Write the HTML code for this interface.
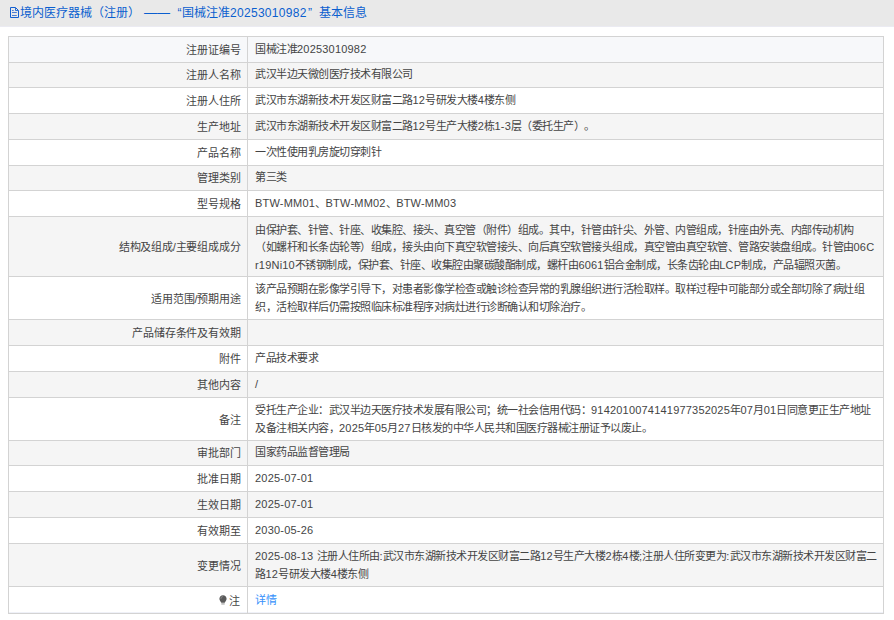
<!DOCTYPE html>
<html lang="zh-CN"><head><meta charset="utf-8"><style>
*{margin:0;padding:0;box-sizing:border-box}
html,body{width:894px;height:620px;overflow:hidden;background:#fff}
body{position:relative;font-family:"Liberation Sans",sans-serif;color:#444;text-spacing-trim:space-all;font-weight:300}
.hd{position:absolute;left:0;top:0;width:894px;height:27px;background:#e9e9e9;border-bottom:1px solid #ebebf2}
.hd .t{position:absolute;left:21px;top:0;height:26px;line-height:26px;font-size:12px;color:#0b5fcf;white-space:nowrap;font-weight:400}
.hd svg{position:absolute;left:10px;top:7px;overflow:visible}
.row{position:absolute;left:8px;width:876px;border-top:1px solid #d3d3d3}
.bl{position:absolute;left:8px;top:36px;width:1px;height:578px;background:#d3d3d3}
.br{position:absolute;left:883px;top:36px;width:1px;height:578px;background:#d3d3d3}
.bb{position:absolute;left:8px;top:613px;width:876px;height:1px;background:#d3d3d3}
.vd{position:absolute;left:247px;top:36px;width:1px;height:577px;background:#d3d3d3}
.lab{position:absolute;right:643.5px;letter-spacing:-0.2px;font-size:11px;white-space:nowrap;text-align:right}
.val{position:absolute;left:247px;letter-spacing:-0.5px;font-size:11px;white-space:nowrap;line-height:17.4px}
.g{background:#f5f5f5}
.b{background:#f7f8fa}
a{color:#3590fb;text-decoration:none;font-weight:400}
.a{letter-spacing:0.2px}
</style></head><body>
<div class="hd"><svg width="9" height="11" viewBox="0 0 9 11"><path d="M0.5 0.5H5.5L8.5 3.5V10.5H0.5Z" fill="none" stroke="#1560d0" stroke-width="1" stroke-linejoin="round"/><path d="M5.5 0.8V3.5H8.2" fill="none" stroke="#1560d0" stroke-width="0.9"/><path d="M2 3.5H3.7M2 5.5H6.8M2 8.5H6.8" fill="none" stroke="#3a6fd0" stroke-width="0.9"/></svg><span class="t" style="left:20px">境内医疗器械（注册）</span><span class="t" style="left:144px;font-size:13px">——</span><span class="t" style="left:177.5px">“</span><span class="t" style="left:182px">国械注准</span><span class="t" style="left:230px;letter-spacing:0.3px">20253010982</span><span class="t" style="left:308px">”</span><span class="t" style="left:319px">基本信息</span></div>

<div class="row b" style="top:36px;height:26px">
<div class="lab" style="top:0.5px;height:25px;line-height:25px">注册证编号</div>
<div class="val" style="top:4.30px">国械注准<span class="a">20253010982</span></div>
</div>
<div class="row g" style="top:62px;height:25px">
<div class="lab" style="top:0px;height:24px;line-height:24px">注册人名称</div>
<div class="val" style="top:3.30px">武汉半边天微创医疗技术有限公司</div>
</div>
<div class="row " style="top:87px;height:26px">
<div class="lab" style="top:0.5px;height:25px;line-height:25px">注册人住所</div>
<div class="val" style="top:4.30px">武汉市东湖新技术开发区财富二路<span class="a">12</span>号研发大楼<span class="a">4</span>楼东侧</div>
</div>
<div class="row g" style="top:113px;height:26px">
<div class="lab" style="top:0.5px;height:25px;line-height:25px">生产地址</div>
<div class="val" style="top:4.30px">武汉市东湖新技术开发区财富二路<span class="a">12</span>号生产大楼<span class="a">2</span>栋<span class="a">1-3</span>层（委托生产）。</div>
</div>
<div class="row " style="top:139px;height:26px">
<div class="lab" style="top:0.5px;height:25px;line-height:25px">产品名称</div>
<div class="val" style="top:4.30px">一次性使用乳房旋切穿刺针</div>
</div>
<div class="row g" style="top:165px;height:25px">
<div class="lab" style="top:0px;height:24px;line-height:24px">管理类别</div>
<div class="val" style="top:3.30px">第三类</div>
</div>
<div class="row " style="top:190px;height:26px">
<div class="lab" style="top:0.5px;height:25px;line-height:25px">型号规格</div>
<div class="val" style="top:4.30px"><span class="a">BTW-MM01</span>、<span class="a">BTW-MM02</span>、<span class="a">BTW-MM03</span></div>
</div>
<div class="row g" style="top:216px;height:60px">
<div class="lab" style="top:0.5px;height:59px;line-height:59px">结构及组成/主要组成成分</div>
<div class="val" style="top:4.90px">由保护套、针管、针座、收集腔、接头、真空管（附件）组成。其中，针管由针尖、外管、内管组成，针座由外壳、内部传动机构<br>（如螺杆和长条齿轮等）组成，接头由向下真空软管接头、向后真空软管接头组成，真空管由真空软管、管路安装盘组成。针管由<span class="a">06C</span><br><span class="a">r19Ni10</span>不锈钢制成，保护套、针座、收集腔由聚碳酸酯制成，螺杆由<span class="a">6061</span>铝合金制成，长条齿轮由<span class="a">LCP</span>制成，产品辐照灭菌。</div>
</div>
<div class="row " style="top:276px;height:43px">
<div class="lab" style="top:0.5px;height:42px;line-height:42px">适用范围/预期用途</div>
<div class="val" style="top:4.10px">该产品预期在影像学引导下，对患者影像学检查或触诊检查异常的乳腺组织进行活检取样。取样过程中可能部分或全部切除了病灶组<br>织，活检取样后仍需按照临床标准程序对病灶进行诊断确认和切除治疗。</div>
</div>
<div class="row g" style="top:319px;height:26px">
<div class="lab" style="top:0.5px;height:25px;line-height:25px">产品储存条件及有效期</div>
<div class="val" style="top:4.30px"></div>
</div>
<div class="row " style="top:345px;height:26px">
<div class="lab" style="top:0.5px;height:25px;line-height:25px">附件</div>
<div class="val" style="top:4.30px">产品技术要求</div>
</div>
<div class="row g" style="top:371px;height:26px">
<div class="lab" style="top:0.5px;height:25px;line-height:25px">其他内容</div>
<div class="val" style="top:4.30px"><span class="a">/</span></div>
</div>
<div class="row " style="top:397px;height:43px">
<div class="lab" style="top:0.5px;height:42px;line-height:42px">备注</div>
<div class="val" style="top:4.10px">受托生产企业：武汉半边天医疗技术发展有限公司；统一社会信用代码：<span class="a">9142010074141977352025</span>年<span class="a">07</span>月<span class="a">01</span>日同意更正生产地址<br>及备注相关内容，<span class="a">2025</span>年<span class="a">05</span>月<span class="a">27</span>日核发的中华人民共和国医疗器械注册证予以废止。</div>
</div>
<div class="row g" style="top:440px;height:25px">
<div class="lab" style="top:0px;height:24px;line-height:24px">审批部门</div>
<div class="val" style="top:3.30px">国家药品监督管理局</div>
</div>
<div class="row " style="top:465px;height:26px">
<div class="lab" style="top:0.5px;height:25px;line-height:25px">批准日期</div>
<div class="val" style="top:4.30px"><span class="a">2025-07-01</span></div>
</div>
<div class="row g" style="top:491px;height:26px">
<div class="lab" style="top:0.5px;height:25px;line-height:25px">生效日期</div>
<div class="val" style="top:4.30px"><span class="a">2025-07-01</span></div>
</div>
<div class="row " style="top:517px;height:26px">
<div class="lab" style="top:0.5px;height:25px;line-height:25px">有效期至</div>
<div class="val" style="top:4.30px"><span class="a">2030-05-26</span></div>
</div>
<div class="row g" style="top:543px;height:43px">
<div class="lab" style="top:0.5px;height:42px;line-height:42px">变更情况</div>
<div class="val" style="top:4.10px"><span class="a">2025-08-13 </span>注册人住所由<span class="a">:</span>武汉市东湖新技术开发区财富二路<span class="a">12</span>号生产大楼<span class="a">2</span>栋<span class="a">4</span>楼<span class="a">;</span>注册人住所变更为<span class="a">:</span>武汉市东湖新技术开发区财富二<br>路<span class="a">12</span>号研发大楼<span class="a">4</span>楼东侧</div>
</div>
<div class="row " style="top:586px;height:27px">
<div class="lab" style="top:0.5px;height:26px;line-height:26px;right:644.5px"><svg width="8" height="10" viewBox="0 0 8 10" style="vertical-align:0px;margin-right:1.5px"><path d="M4 0.2C6.1 0.2 7.6 1.8 7.6 3.8C7.6 5.4 6.5 6.3 5.7 7.7H2.3C1.5 6.3 0.4 5.4 0.4 3.8C0.4 1.8 1.9 0.2 4 0.2Z" fill="#5a5a5a"/><path d="M1.9 3.9A2.2 2.2 0 0 1 3.9 1.5" fill="none" stroke="#9a9a9a" stroke-width="0.7"/><rect x="2.3" y="8.2" width="3.4" height="1.4" fill="#b0b0b0"/></svg>注</div>
<div class="val" style="top:4.80px"><a>详情</a></div>
</div>
<div style="position:absolute;left:9px;top:612px;width:874px;height:1px;background:#eff1f8"></div><div class="bl"></div><div class="br"></div><div class="bb"></div><div class="vd"></div>
</body></html>
